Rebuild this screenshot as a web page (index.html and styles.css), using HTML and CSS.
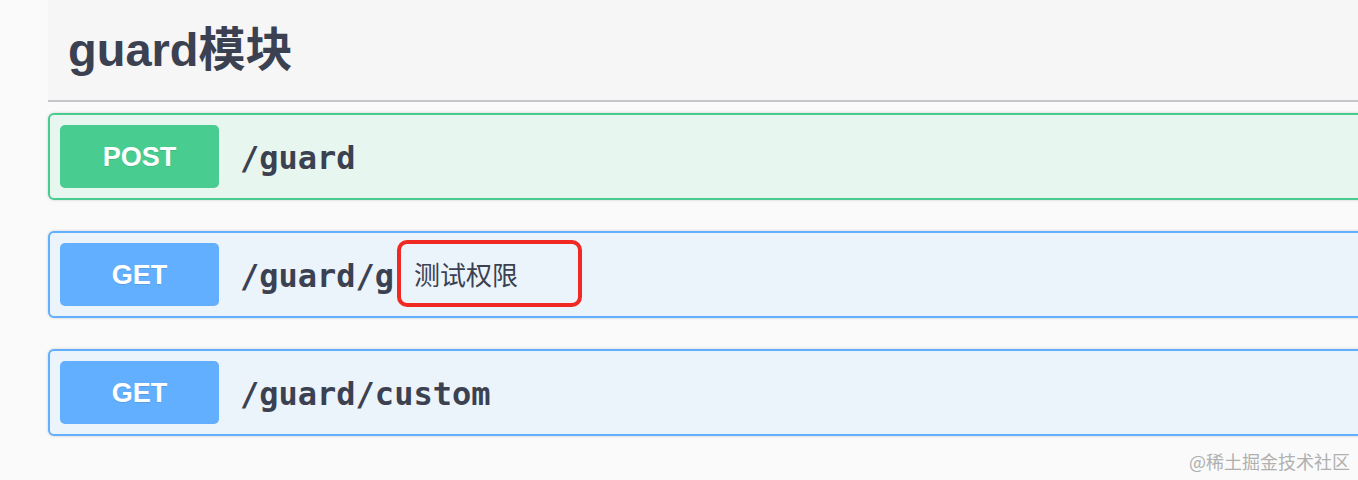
FILE: index.html
```html
<!DOCTYPE html>
<html lang="zh-CN">
<head>
<meta charset="utf-8">
<title>guard模块</title>
<link rel="stylesheet" href="styles.css">
</head>
<body>
<div class="page">
  <section class="tag-section">
    <h3 class="tag-title">guard模块</h3>
    <div class="op-list">
      <div class="opblock opblock-post">
        <span class="method">POST</span>
        <span class="path">/guard</span>
      </div>
      <div class="opblock opblock-get">
        <span class="method">GET</span>
        <span class="path">/guard/g</span>
        <div class="note">测试权限</div>
      </div>
      <div class="opblock opblock-get">
        <span class="method">GET</span>
        <span class="path">/guard/custom</span>
      </div>
    </div>
  </section>
  <div class="watermark">@稀土掘金技术社区</div>
</div>
</body>
</html>
```
FILE: styles.css
```css
html, body {
  margin: 0;
  padding: 0;
  background: #fafafa;
  overflow: hidden;
}
.page {
  width: 1358px;
  height: 480px;
  position: relative;
  overflow: hidden;
  font-family: "Liberation Sans", Arial, "Noto Sans CJK SC", sans-serif;
}
.tag-section {
  margin-left: 48px;
  width: 1330px;
  display: flex;
  flex-direction: column;
}
.tag-title {
  margin: 0;
  height: 102px;
  box-sizing: border-box;
  padding: 22px 0 0 20px;
  font-size: 47px;
  line-height: 56px;
  font-weight: 700;
  color: #3b4151;
  background: #f6f6f7;
  border-bottom: 2px solid #c4c5c8;
}
.op-list {
  display: flex;
  flex-direction: column;
  gap: 31px;
  padding-top: 11px;
}
.opblock {
  position: relative;
  display: flex;
  align-items: center;
  height: 87px;
  box-sizing: border-box;
  padding: 10px;
  border: 2px solid;
  border-radius: 6px;
  box-shadow: 0 0 3px rgba(0, 0, 0, .19);
}
.opblock-post {
  border-color: #49cc90;
  background: #e8f6f0;
}
.opblock-get {
  border-color: #61affe;
  background: #ebf3fb;
}
.method {
  width: 159px;
  height: 63px;
  display: flex;
  align-items: center;
  justify-content: center;
  border-radius: 5px;
  color: #fff;
  font-size: 27px;
  font-weight: 700;
  padding-top: 2px;
  box-sizing: border-box;
  text-shadow: 0 1px 0 rgba(0, 0, 0, .1);
}
.opblock-post .method { background: #49cc90; }
.opblock-get .method { background: #61affe; }
.path {
  margin-left: 21px;
  padding-top: 2px;
  font-family: "DejaVu Sans Mono", "Liberation Mono", monospace;
  font-size: 32px;
  font-weight: 700;
  color: #3b4151;
}
.note {
  position: absolute;
  left: 347px;
  top: 7px;
  width: 185px;
  height: 67px;
  box-sizing: border-box;
  padding-left: 13px;
  display: flex;
  align-items: center;
  background: #ebf3fb;
  border: 4px solid #f02a22;
  border-radius: 10px;
  font-family: "Noto Sans CJK SC", sans-serif;
  font-size: 26px;
  color: #3b4151;
}
.watermark {
  position: absolute;
  right: 8px;
  bottom: 6px;
  font-family: "Noto Sans CJK SC", sans-serif;
  font-size: 18px;
  color: #b0b0b0;
}
```
